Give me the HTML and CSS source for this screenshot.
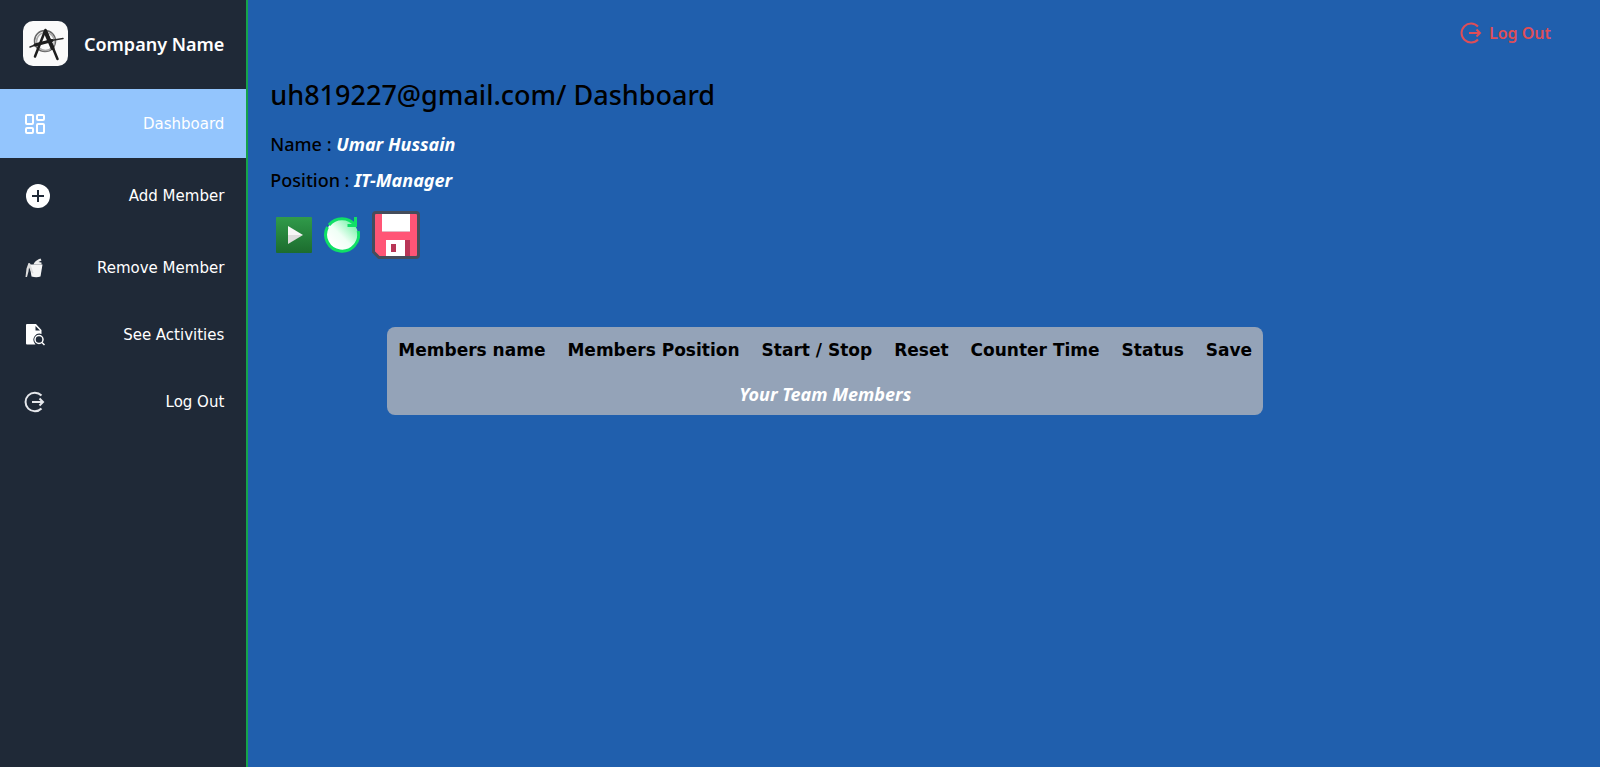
FILE: index.html
```html
<!DOCTYPE html>
<html lang="en">
<head>
<meta charset="utf-8">
<title>Dashboard</title>
<link rel="stylesheet" href="styles.css">
</head>
<body>
<div class="app">
  <aside class="sidebar">
    <div class="brand">
      <svg class="brand-logo" viewBox="0 0 45 45" aria-hidden="true">
        <rect width="45" height="45" rx="10" fill="#fafafa"/>
        <g fill="none" stroke-linecap="round">
          <circle cx="22" cy="20" r="10.500" stroke="#666" stroke-width="1.500"/>
          <circle cx="22.500" cy="20.500" r="9" stroke="#aaa" stroke-width="1.500"/>
          <path d="M12 35.500 22 10" stroke="#1d1d1d" stroke-width="2.500"/>
          <path d="M22.500 9 34.500 38" stroke="#1d1d1d" stroke-width="2.500"/>
          <path d="M22.500 11 29.500 27" stroke="#1d1d1d" stroke-width="4"/>
          <path d="M7 26 16 22.500 28 19.500 40 17.500" stroke="#2a2a2a" stroke-width="1.500"/>
          <path d="M12 24 29 19.500" stroke="#1d1d1d" stroke-width="3"/>
        </g>
      </svg>
      <span class="brand-name">Company Name</span>
    </div>
    <nav class="menu">
      <a class="menu-item active" href="#">
        <svg class="icon" width="24" height="24" viewBox="0 0 24 24" aria-hidden="true">
          <g fill="none" stroke="#fff" stroke-width="2">
            <rect x="3" y="3" width="7" height="9" rx="1"/>
            <rect x="14" y="3" width="7" height="5" rx="1"/>
            <rect x="14" y="12" width="7" height="9" rx="1"/>
            <rect x="3" y="16" width="7" height="5" rx="1"/>
          </g>
        </svg>
        <span>Dashboard</span>
      </a>
      <a class="menu-item tall" href="#">
        <svg class="icon" width="30" height="30" viewBox="0 0 30 30" aria-hidden="true">
          <circle cx="15" cy="15" r="12" fill="#fff"/>
          <path d="M15 9v12M9 15h12" stroke="#1f2937" stroke-width="2"/>
        </svg>
        <span>Add Member</span>
      </a>
      <a class="menu-item" href="#">
        <svg class="icon" width="24" height="24" viewBox="0 0 24 24" aria-hidden="true">
          <path d="M6.500 8.500h13l-2 12q-4 1.500-9 0z" fill="#f5f5f5"/>
          <path d="M10.500 8.500C12 5 14 4 17.500 2.500l1 2-3 1.500 3 .5v2z" fill="#eee"/>
          <path d="M5.500 7c1.500-.5 2 .5 2.500 3l2.500 7-1.500.500-3-6-.5 4-1.500 5.500H2.500l1-8.500z" fill="#ddd"/>
        </svg>
        <span>Remove Member</span>
      </a>
      <a class="menu-item" href="#">
        <svg class="icon" width="24" height="24" viewBox="0 0 24 24" aria-hidden="true">
          <path d="M4 1h9l5.500 6v4a6 6 0 0 0-7 9l1 1.500H4q-1 0-1-1V2q0-1 1-1zm8.500 2v4.500H17z" fill="#fff" fill-rule="evenodd"/>
          <circle cx="16" cy="16.500" r="4" fill="none" stroke="#fff" stroke-width="1.500"/>
          <path d="m19 19.500 2.500 2.500" stroke="#fff" stroke-width="1.500"/>
        </svg>
        <span>See Activities</span>
      </a>
      <a class="menu-item" href="#">
        <svg class="icon" width="24" height="24" viewBox="0 0 24 24" aria-hidden="true">
          <path d="M18.500 5.500A9.300 9.300 0 1 0 18.500 18.500" fill="none" stroke="#e5e7eb" stroke-width="2"/>
          <path d="M9 12h11M16.500 8.500 20 12l-3.500 3.500" fill="none" stroke="#e5e7eb" stroke-width="2"/>
        </svg>
        <span>Log Out</span>
      </a>
    </nav>
  </aside>
  <main class="content">
    <header class="topbar">
      <button class="logout" type="button">
        <svg width="24" height="24" viewBox="0 0 24 24" aria-hidden="true">
          <path d="M19 5.500A9.500 9.500 0 1 0 19 18.500" fill="none" stroke="currentColor" stroke-width="2"/>
          <path d="M10 12h11M17.500 8.500 21 12l-3.500 3.500" fill="none" stroke="currentColor" stroke-width="2"/>
        </svg>
        Log Out
      </button>
    </header>
    <h1 class="title">uh819227@gmail.com/ Dashboard</h1>
    <p class="info">Name : <em>Umar Hussain</em></p>
    <p class="info">Position : <em>IT-Manager</em></p>
    <div class="actions">
      <button type="button" aria-label="Start">
        <svg width="36" height="36" viewBox="0 0 36 36" aria-hidden="true">
          <defs>
            <linearGradient id="play" x1="0" y1="0" x2="0" y2="1"><stop offset="0" stop-color="#309b4a"/><stop offset="1" stop-color="#1c6c2e"/></linearGradient>
          </defs>
          <rect width="36" height="36" rx="1" fill="url(#play)"/>
          <path d="M12 9 27 18H12z" fill="#f7f7f7"/>
          <path d="M12 18h15L12 27z" fill="#dedede"/>
        </svg>
      </button>
      <button type="button" aria-label="Reset">
        <svg width="36" height="36" viewBox="0 0 36 36" aria-hidden="true">
          <defs>
            <linearGradient id="reset" x1="0.200" y1="0.800" x2="0.900" y2="0.100"><stop offset="0" stop-color="#fff"/><stop offset="0.400" stop-color="#effff5"/><stop offset="1" stop-color="#72f2a5"/></linearGradient>
          </defs>
          <circle cx="18" cy="18" r="16" fill="url(#reset)"/>
          <path d="M34.200 14A16.500 16.500 0 1 1 3.500 10M5 8A16.500 16.500 0 0 1 31 8" fill="none" stroke="#10e066" stroke-width="3"/>
          <path d="M31.500 0v8.500h-8" fill="none" stroke="#10e066" stroke-width="3"/>
        </svg>
      </button>
      <button type="button" aria-label="Save">
        <svg width="48" height="48" viewBox="0 0 48 48" aria-hidden="true">
          <path d="M4 1.500h40q2.500 0 2.500 2.500v40q0 2.500-2.500 2.500H7L1.500 41V4q0-2.500 2.500-2.500z" fill="#ff5576" stroke="#454d5b" stroke-width="3"/>
          <path d="M10 3h28v17H10z" fill="#fff"/>
          <path d="M10 20h28v1H10z" fill="#e4b5c2"/>
          <path d="M14 29h19v16H14z" fill="#fff"/>
          <path d="M33 29h5v16h-5zM19 33h5v8h-5z" fill="#b83556"/>
        </svg>
      </button>
    </div>
    <div class="members-area">
      <table class="members">
        <thead>
          <tr>
            <th scope="col">Members name</th>
            <th scope="col">Members Position</th>
            <th scope="col">Start / Stop</th>
            <th scope="col">Reset</th>
            <th scope="col">Counter Time</th>
            <th scope="col">Status</th>
            <th scope="col">Save</th>
          </tr>
        </thead>
        <tbody>
          <tr><td colspan="7">Your Team Members</td></tr>
        </tbody>
      </table>
    </div>
  </main>
</div>
</body>
</html>
```
FILE: styles.css
```css
* {
  box-sizing: border-box;
}

body {
  margin: 0;
  font-family: "Noto Sans", "Open Sans", sans-serif;
  background: #205fad;
  color: #000;
}

svg {
  display: block;
}

.app {
  display: flex;
  min-height: 100vh;
}

.sidebar {
  flex: none;
  background: #1f2937;
  border-right: 2px solid #16a34a;
  color: #fff;
}

.brand {
  display: flex;
  align-items: center;
  gap: 16px;
  padding: 21px 22px 23px 23px;
}

.brand-logo {
  width: 45px;
  height: 45px;
}

.brand-name {
  font-size: 18px;
  font-weight: 600;
  line-height: 24px;
}

.menu-item {
  display: flex;
  align-items: center;
  justify-content: space-between;
  height: 67px;
  padding: 0 22px 0 23px;
  color: #fff;
  font-family: "DejaVu Sans", sans-serif;
  font-size: 15px;
  text-decoration: none;
}

.menu-item.active {
  height: 69px;
  background: #93c5fd;
}

.menu-item.tall {
  height: 76px;
}

.content {
  flex: 1;
  padding: 0 24px 0 22px;
}

.topbar {
  display: flex;
  justify-content: flex-end;
  padding: 21px 25px 19px;
}

button {
  padding: 0;
  border: 0;
  background: none;
  font: inherit;
  cursor: pointer;
}

.logout {
  display: flex;
  align-items: center;
  gap: 6px;
  color: #df4e58;
  font-size: 16px;
  font-weight: 600;
  line-height: 24px;
}

.title {
  margin: 11px 0 15px;
  font-size: 27px;
  font-weight: 500;
  line-height: 40px;
}

.info {
  margin: 0 0 8px;
  font-size: 18px;
  font-weight: 500;
  line-height: 28px;
}

.info em {
  color: #fff;
  font-weight: 700;
}

.actions {
  display: flex;
  align-items: center;
  gap: 12px;
  padding: 9px 6px;
}

.members-area {
  display: flex;
  justify-content: center;
  padding: 59px 15% 0 0;
}

.members {
  border-collapse: collapse;
  border-radius: 8px;
  background: #94a3b8;
}

.members th {
  padding: 12px 11px;
  font-family: "DejaVu Sans", sans-serif;
  font-size: 17px;
  font-weight: 700;
  line-height: 22px;
  white-space: nowrap;
}

.members td {
  padding: 7px 11px;
  color: #fff;
  font-size: 18px;
  font-style: italic;
  font-weight: 700;
  line-height: 28px;
  text-align: center;
}
```
